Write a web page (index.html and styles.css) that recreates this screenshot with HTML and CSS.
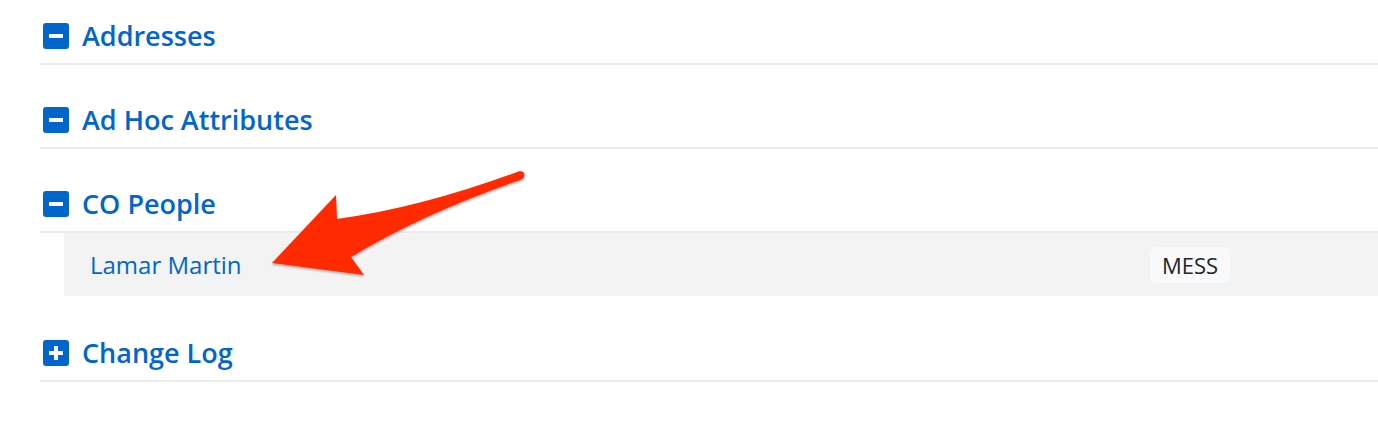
FILE: index.html
```html
<!DOCTYPE html>
<html>
<head>
<meta charset="utf-8">
<link rel="stylesheet" href="styles.css">
</head>
<body>
<div class="page">
  <section class="panel">
    <h2 class="panel-title"><span class="toggle minus"></span>Addresses</h2>
  </section>
  <section class="panel">
    <h2 class="panel-title"><span class="toggle minus"></span>Ad Hoc Attributes</h2>
  </section>
  <section class="panel">
    <h2 class="panel-title"><span class="toggle minus"></span>CO People</h2>
    <div class="rows">
      <div class="row">
        <a class="person" href="#">Lamar Martin</a>
        <span class="badge">MESS</span>
      </div>
    </div>
  </section>
  <section class="panel">
    <h2 class="panel-title"><span class="toggle plus"></span>Change Log</h2>
  </section>
  <svg class="arrow" width="1378" height="444" viewBox="0 0 1378 444">
    <defs>
      <filter id="sh" x="-10%" y="-10%" width="120%" height="130%">
        <feDropShadow dx="0" dy="1.5" stdDeviation="1.2" flood-color="#000" flood-opacity="0.35"/>
      </filter>
    </defs>
    <path filter="url(#sh)" fill="#ff2a00" d="M 520 171 Q 526 172 524 177 Q 522 180 517 181 Q 420 215 351 257 L 364 275 L 272 263 L 336 195 L 337 219 Q 420 208 520 171 Z"/>
  </svg>
</div>
</body>
</html>
```
FILE: styles.css
```css
html, body {
  margin: 0;
  padding: 0;
  background: #fff;
  overflow: hidden;
}
.page {
  position: relative;
  width: 1378px;
  height: 444px;
  padding-top: 10px;
  box-sizing: border-box;
  font-family: "Open Sans", "Noto Sans", sans-serif;
}
.panel {
  margin-left: 40px;
}
.panel + .panel {
  margin-top: 29px;
}
.panel-title {
  margin: 0;
  padding: 8px 0 9px 3px;
  display: flex;
  align-items: center;
  gap: 13px;
  font-size: 27px;
  line-height: 36px;
  font-weight: 600;
  color: #0066cc;
  border-bottom: 2px solid #ebebeb;
}
.toggle {
  position: relative;
  width: 26px;
  height: 26px;
  border-radius: 3px;
  background: #0066cc;
  flex: none;
}
.toggle::before {
  content: "";
  position: absolute;
  left: 6px;
  top: 11px;
  width: 14px;
  height: 4px;
  background: #fff;
}
.toggle.plus::after {
  content: "";
  position: absolute;
  left: 11px;
  top: 6px;
  width: 4px;
  height: 14px;
  background: #fff;
}
.rows {
  margin-left: 24px;
}
.row {
  display: grid;
  grid-template-columns: 1086px auto;
  align-items: center;
  height: 63px;
  background: #f3f3f3;
}
.person {
  padding-left: 26px;
  font-size: 24px;
  color: #0066cc;
  text-decoration: none;
}
.badge {
  justify-self: start;
  padding: 4px 12px;
  border-radius: 6px;
  background: #f8f9fa;
  color: #212529;
  font-size: 22px;
  line-height: 28px;
}
.panel:last-of-type {
  margin-top: 31px;
}
.arrow {
  position: absolute;
  left: 0;
  top: 0;
  pointer-events: none;
}
```
